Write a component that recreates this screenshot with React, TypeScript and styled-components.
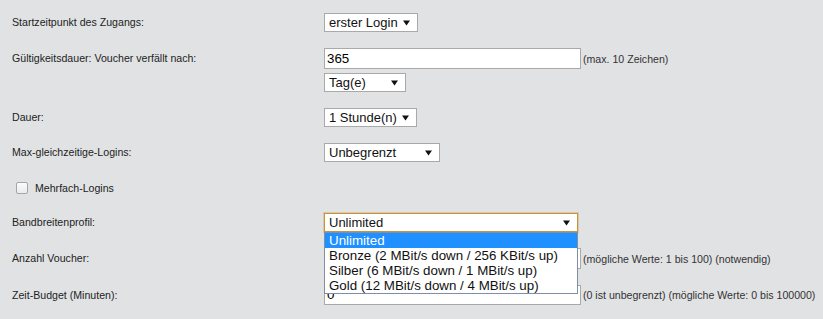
import React from "react";
import styled, { createGlobalStyle } from "styled-components";

const GlobalStyle = createGlobalStyle`
  html, body {
    margin: 0;
    padding: 0;
    background: #e1e2e4;
    font-family: "Liberation Sans", Arial, sans-serif;
  }
`;

const profiles = [
  "Unlimited",
  "Bronze (2 MBit/s down / 256 KBit/s up)",
  "Silber (6 MBit/s down / 1 MBit/s up)",
  "Gold (12 MBit/s down / 4 MBit/s up)",
];

const Arrow = () => (
  <svg width="7" height="6" viewBox="0 0 7 6">
    <path d="M0 0.5 L7 0.5 L3.5 5.5 Z" fill="#111" />
  </svg>
);

type SelectProps = { value: string; width: number; focused?: boolean; children?: React.ReactNode };

const Select = ({ value, width, focused, children }: SelectProps) => (
  <SelectBox width={width} focused={focused}>
    <SelectText>{value}</SelectText>
    <Arrow />
    {children}
  </SelectBox>
);

const App: React.FC = () => {
  return (
    <>
      <GlobalStyle />
      <Form>
        <Row>
          <Label h={19}>Startzeitpunkt des Zugangs:</Label>
          <Cell>
            <Select value="erster Login" width={94} />
          </Cell>
        </Row>

        <Row>
          <Label h={21}>Gültigkeitsdauer: Voucher verfällt nach:</Label>
          <Cell>
            <Line>
              <TextInput>365</TextInput>
              <Hint>(max. 10 Zeichen)</Hint>
            </Line>
            <Select value="Tag(e)" width={82} />
          </Cell>
        </Row>

        <Row>
          <Label h={19}>Dauer:</Label>
          <Cell>
            <Select value="1 Stunde(n)" width={93} />
          </Cell>
        </Row>

        <Row>
          <Label h={19}>Max-gleichzeitige-Logins:</Label>
          <Cell>
            <Select value="Unbegrenzt" width={116} />
          </Cell>
        </Row>

        <CheckRow>
          <CheckBox />
          <CheckLabel>Mehrfach-Logins</CheckLabel>
        </CheckRow>

        <Row>
          <Label h={19}>Bandbreitenprofil:</Label>
          <Cell>
            <Select value="Unlimited" width={254} focused>
              <DropList>
                {profiles.map((p, i) => (
                  <Option key={p} active={i === 0}>
                    {p}
                  </Option>
                ))}
              </DropList>
            </Select>
          </Cell>
        </Row>

        <Row>
          <Label h={21}>Anzahl Voucher:</Label>
          <Cell>
            <Line>
              <TextInput />
              <Hint>(mögliche Werte: 1 bis 100) (notwendig)</Hint>
            </Line>
          </Cell>
        </Row>

        <Row>
          <Label h={20}>Zeit-Budget (Minuten):</Label>
          <Cell>
            <Line>
              <TextInput short>0</TextInput>
              <Hint>(0 ist unbegrenzt) (mögliche Werte: 0 bis 100000)</Hint>
            </Line>
          </Cell>
        </Row>
      </Form>
    </>
  );
};

const Form = styled.div`
  display: flex;
  flex-direction: column;
  gap: 16px;
  padding: 13px 0 0 12px;
`;

const Row = styled.div`
  display: grid;
  grid-template-columns: 312px 1fr;
  align-items: start;
`;

const Label = styled.div<{ h: number }>`
  font-size: 10.6px;
  line-height: ${({ h }) => h}px;
  color: #222;
  white-space: nowrap;
`;

const Cell = styled.div`
  display: flex;
  flex-direction: column;
  align-items: flex-start;
  gap: 4px;
`;

const Line = styled.div`
  display: flex;
  align-items: center;
  gap: 2px;
`;

const TextInput = styled.div<{ short?: boolean }>`
  box-sizing: border-box;
  width: 257px;
  height: ${({ short }) => (short ? 20 : 21)}px;
  padding: 0 2px;
  background: #fff;
  border: 1px solid #a9a9a9;
  font-size: 13.33px;
  line-height: ${({ short }) => (short ? 17 : 19)}px;
  color: #000;
`;

const Hint = styled.span`
  font-size: 10.6px;
  color: #333;
  white-space: nowrap;
`;

const SelectBox = styled.div<{ width: number; focused?: boolean }>`
  position: relative;
  box-sizing: border-box;
  width: ${({ width }) => width}px;
  height: 19px;
  display: flex;
  align-items: center;
  justify-content: space-between;
  padding: 0 7px 0 4px;
  background: #fff;
  border: 1px solid ${({ focused }) => (focused ? "#c4933c" : "#a9a9a9")};
  box-shadow: ${({ focused }) => (focused ? "0 0 0 1px rgba(214, 166, 90, 0.45)" : "none")};
`;

const SelectText = styled.span`
  font-size: 13px;
  color: #111;
  white-space: nowrap;
`;

const DropList = styled.div`
  position: absolute;
  top: 18px;
  left: -1px;
  width: 254px;
  box-sizing: border-box;
  background: #fff;
  border: 1px solid #7f8fa6;
  z-index: 5;
`;

const Option = styled.div<{ active: boolean }>`
  height: 15px;
  line-height: 15px;
  padding-left: 4px;
  font-size: 13.33px;
  white-space: nowrap;
  color: ${({ active }) => (active ? "#fff" : "#111")};
  background: ${({ active }) => (active ? "#1e90ff" : "#fff")};
`;

const CheckRow = styled.div`
  display: flex;
  align-items: center;
  gap: 7px;
  height: 19px;
  padding-left: 4px;
`;

const CheckBox = styled.span`
  box-sizing: border-box;
  width: 12px;
  height: 12px;
  border: 1px solid #a6a6a6;
  border-radius: 2px;
  background: linear-gradient(#fbfbfb, #ececec);
`;

const CheckLabel = styled.span`
  font-size: 10.6px;
  color: #222;
`;

export default App;
